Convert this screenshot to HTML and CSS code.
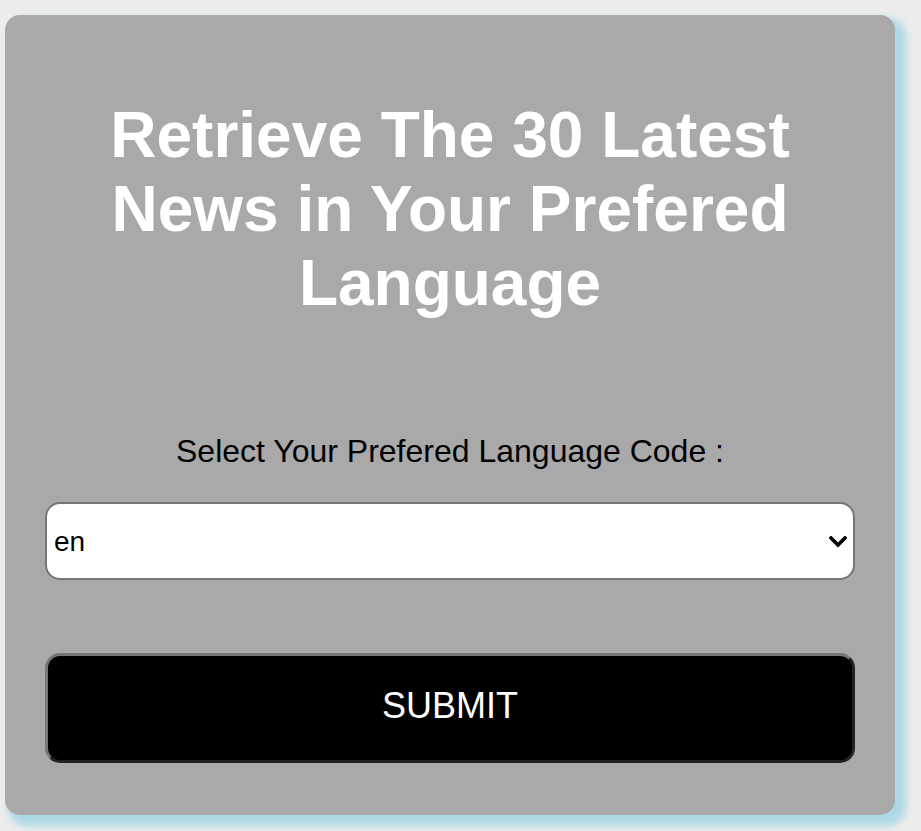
FILE: index.html
```html
<!DOCTYPE html>
<html lang="en">
<head>
<meta charset="utf-8">
<title>Latest News</title>
<link rel="stylesheet" href="styles.css">
</head>
<body>
  <main class="card">
    <h1 class="title">Retrieve The 30 Latest News in Your Prefered Language</h1>
    <form class="form">
      <label class="label" for="lang">Select Your Prefered Language Code :</label>
      <div class="select-wrap">
        <select id="lang" class="select">
          <option>en</option>
          <option>fr</option>
          <option>de</option>
          <option>es</option>
        </select>
        <svg class="chevron" width="18" height="12" viewBox="0 0 18 12" aria-hidden="true">
          <polyline points="2,2 9,9 16,2" fill="none" stroke="#000" stroke-width="3.6" stroke-linecap="square" stroke-linejoin="miter"/>
        </svg>
      </div>
      <button type="button" class="submit">SUBMIT</button>
    </form>
  </main>
</body>
</html>
```
FILE: styles.css
```css
html, body {
  margin: 0;
  padding: 0;
}

html {
  background: #ececec;
  min-height: 100%;
}

body {
  font-family: "Liberation Sans", Arial, Helvetica, sans-serif;
  padding: 15px 0 20px 5px;
}

.card {
  box-sizing: border-box;
  width: 890px;
  height: 800px;
  background: #a9a9a9;
  border-radius: 15px;
  box-shadow: 7px 7px 7px 4px #add8e6;
  padding: 40px 40px 0;
  display: flex;
  flex-direction: column;
}

.title {
  margin: 43px auto 0;
  max-width: 720px;
  font-size: 64px;
  line-height: 74px;
  font-weight: 700;
  color: #ffffff;
  text-align: center;
}

.form {
  display: flex;
  flex-direction: column;
}

.label {
  margin-top: 113px;
  font-size: 32px;
  line-height: 37px;
  color: #000;
  text-align: center;
}

.select-wrap {
  position: relative;
  margin-top: 32px;
}

.select {
  box-sizing: border-box;
  width: 100%;
  height: 78px;
  -webkit-appearance: none;
  appearance: none;
  background: #fff;
  border: 2px solid #767676;
  border-radius: 15px;
  padding: 0 40px 0 7px;
  font-family: "Liberation Sans", Arial, Helvetica, sans-serif;
  font-size: 28px;
  color: #000;
  outline: none;
}

.chevron {
  position: absolute;
  right: 8px;
  top: 34px;
  pointer-events: none;
}

.submit {
  box-sizing: border-box;
  margin-top: 73px;
  width: 100%;
  height: 110px;
  background: #000;
  color: #fff;
  border: 3px solid;
  border-color: #777 #222 #222 #777;
  border-radius: 15px;
  font-family: "Liberation Sans", Arial, Helvetica, sans-serif;
  font-size: 36px;
  line-height: 1;
  padding: 0 0 4px;
  cursor: pointer;
}
```
